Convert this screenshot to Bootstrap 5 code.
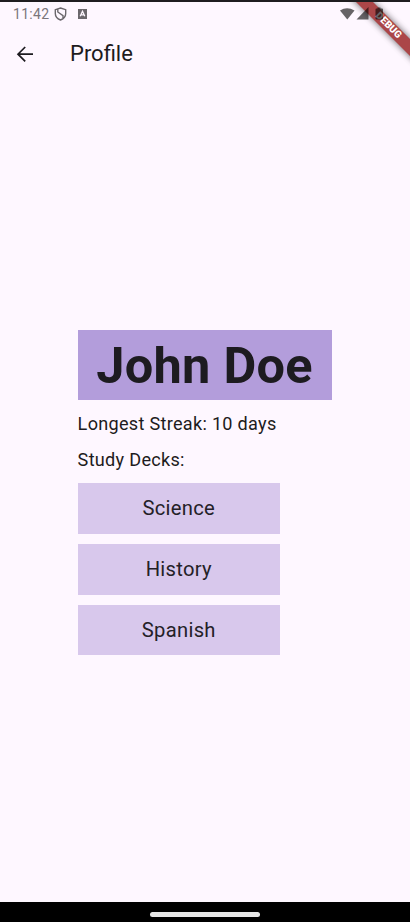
<!DOCTYPE html>
<html lang="en">
<head>
<meta charset="utf-8">
<meta name="viewport" content="width=device-width, initial-scale=1">
<title>Profile</title>
<link href="https://cdn.jsdelivr.net/npm/bootstrap@5.3.0/dist/css/bootstrap.min.css" rel="stylesheet">
<script src="https://cdn.jsdelivr.net/npm/bootstrap@5.3.0/dist/js/bootstrap.bundle.min.js" defer></script>
<style>
body{font-family:Roboto,sans-serif;background:#fef7ff;color:#1d1b20;overflow:hidden}
.screen{height:922px;width:410px;border-top:2px solid #1f1d20}
.statusbar{height:24px;padding:0 25px 0 13px;color:#7a767b;font-size:14px;line-height:24px}
.clock{letter-spacing:.3px;width:41px}
.keyboard-icon{margin-left:11px}
.status-icons{z-index:3}
.debug-banner{top:0;right:0;z-index:2}
.appbar{height:56px;padding-left:16px}
.appbar h1{font-size:22px;line-height:28px;margin-left:35px}
.profile{width:254px;margin:247.6px 0 0 77.6px}
.name-box{height:70.7px;background:#b39ddb;font-size:50.5px;line-height:71px;letter-spacing:.25px}
.info{font-size:18.1px;line-height:26px;letter-spacing:.29px}
.streak{margin-top:10.3px}
.decks-label{margin:10px 0 10.8px}
.decks{width:202.4px;gap:10.1px}
.deck{height:50.6px;background:#d8c8ec;color:#242127;font-size:20.2px;line-height:50px;letter-spacing:.3px}
.navbar-system{height:20px;background:#000;padding-top:5px}
.handle{width:110px;height:5px;background:#e6e6e6}
</style>
</head>
<body>
<div class="screen d-flex flex-column position-relative">
  <div class="statusbar d-flex align-items-center">
    <span class="clock text-nowrap">11:42</span>
    <svg width="13" height="14" viewBox="0 0 13 14" fill="none" stroke="#6b676c" stroke-width="1.4"><path d="M6.5 1 11.7 2.7V6.5Q11.7 11 6.5 13 1.3 11 1.3 6.5V2.7ZM3.8 2.2V5L9 8.6V11.4"/></svg>
    <svg class="keyboard-icon" width="9" height="10" viewBox="0 0 9 10"><path fill="#6b676c" d="M0 0h9v10H0z"/><path fill="none" stroke="#fef7ff" stroke-width="1.3" d="M2.2 7.2 4.5 2.3 6.8 7.2M3 5.8h3"/></svg>
    <svg class="status-icons ms-auto position-relative" width="45" height="14" viewBox="0 0 45 14"><g fill="#000" fill-opacity=".6"><path d="M0 3.5Q7-1 14.5 3.5L7.3 12.4Z"/><path d="M28.5 0V12.4H16.5Z"/><path d="M37.5.5h3v1h1.5q1 0 1 1V11.4q0 1-1 1H36.5q-1 0-1-1V2.5q0-1 1-1h1z"/></g></svg>
  </div>
  <svg class="debug-banner position-absolute" width="80" height="80" viewBox="330 2 80 80">
    <defs><filter id="soft" x="-50%" y="-50%" width="200%" height="200%"><feGaussianBlur stdDeviation="3.6"/></filter></defs>
    <path d="M348-6 365-6 422 51V68Z" fill="#000" opacity=".6" filter="url(#soft)"/>
    <path d="M352-2H369L416 45V62Z" fill="#ab4648"/>
    <text transform="translate(386.4 27.4) rotate(45)" text-anchor="middle" font-family="Roboto,sans-serif" font-weight="900" font-size="10" fill="#fff">DEBUG</text>
  </svg>
  <header class="appbar d-flex align-items-center">
    <svg width="19" height="18" viewBox="0 0 19 18" fill="none" stroke="#1d1b20" stroke-width="1.7"><path d="M17 9.2H2.5M9.2 2 2 9.2l7.2 7.2"/></svg>
    <h1 class="mb-0 fw-normal">Profile</h1>
  </header>
  <main class="profile flex-grow-1">
    <div class="name-box fw-bold text-center">John Doe</div>
    <div class="info streak text-nowrap">Longest Streak: 10 days</div>
    <div class="info decks-label text-nowrap">Study Decks:</div>
    <div class="decks d-flex flex-column">
      <div class="deck text-center">Science</div>
      <div class="deck text-center">History</div>
      <div class="deck text-center">Spanish</div>
    </div>
  </main>
  <footer class="navbar-system d-flex justify-content-center align-items-center">
    <div class="handle rounded-pill"></div>
  </footer>
</div>
</body>
</html>
